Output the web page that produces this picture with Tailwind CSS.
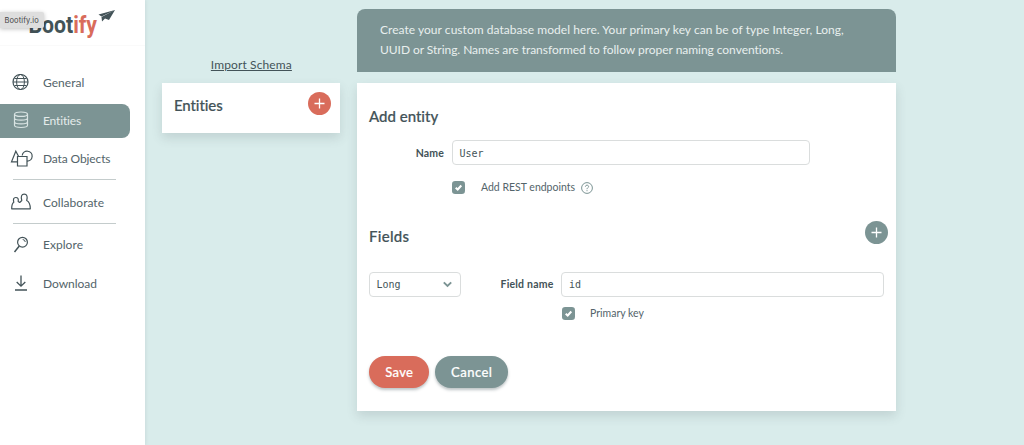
<!DOCTYPE html>
<html lang="en">
<head>
<meta charset="utf-8">
<title>Bootify.io</title>
<script src="https://cdn.jsdelivr.net/npm/@tailwindcss/browser@4"></script>
</head>
<body class="flex h-[445px] w-[1024px] overflow-hidden bg-[#d9eceb] font-['Lato',sans-serif] text-[#435358] [font-variant-ligatures:none]">
<aside class="relative h-full w-[145px] shrink-0 bg-white shadow-[0_0_4px_rgba(67,83,88,0.15)]">
  <header class="h-[46px] border-b border-[#fafafa]">
    <svg class="block" width="145" height="45" viewBox="0 0 145 45">
      <text x="28.5" y="33.3" font-family="Roboto" font-weight="700" font-size="24" textLength="68.5" lengthAdjust="spacingAndGlyphs" fill="#435358">Boot<tspan fill="#d96c5b">ify</tspan></text>
      <path d="M115 10L98.500 14.500L101.500 16.500ZM115 10L101.500 17L102 21.500L105 18.500L109 20Z" fill="#435358"/>
    </svg>
  </header>
  <div class="absolute left-0 top-[12px] flex h-[16px] w-[44px] items-center rounded-r-[2px] bg-[#dedede] pl-[4.500px] pt-px font-['Inter',sans-serif] text-[7.500px] tracking-[0.100px] text-[#444] shadow-[0_1px_4px_rgba(0,0,0,0.250)]">Bootify.io</div>
  <nav class="pt-[20px] text-[12px] text-[#53646a]">
    <a class="flex h-[34px] items-center">
      <svg class="mb-[2px] ml-[12px] mr-[14px]" width="17" height="17" viewBox="0 0 17 17" fill="none" stroke="#435358"><circle cx="8.500" cy="8" r="7.500" stroke-width="1.200"/><ellipse cx="8.500" cy="8" rx="3.900" ry="7.500"/><path d="M1 8H16M2.500 4.500H14.500M2.500 11.500H14.500"/></svg>
      <span class="tracking-[0.040px]">General</span>
    </a>
    <a class="mt-[4px] flex h-[34px] w-[130px] items-center rounded-r-[8px] bg-[#7c9494] text-[#e5eceb]">
      <svg class="mb-[2px] ml-[13px] mr-[14px]" width="16" height="18" viewBox="0 0 16 18" fill="none" stroke="#d9e4e3" stroke-width="1.200"><ellipse cx="8" cy="3.200" rx="6.500" ry="2.200"/><path d="M1.500 3.200V14.300C1.500 17.200 14.500 17.200 14.500 14.300V3.200M1.500 7C1.500 9.900 14.500 9.900 14.500 7M1.500 10.700C1.500 13.600 14.500 13.600 14.500 10.700"/></svg>
      <span class="-tracking-[0.150px]">Entities</span>
    </a>
    <a class="mt-[4px] flex h-[34px] items-center">
      <svg class="mb-[3px] ml-[10px] mr-[10px]" width="23" height="18" viewBox="0 0 23 18" fill="none" stroke="#435358" stroke-width="1.200"><path d="M7 12.900H1.500L5.800 2.200L8.500 7.300M12.200 6.500A5 5 0 1 1 17 12.200"/><path d="M7.500 7.500H17V17H7.500Z"/></svg>
      <span class="-tracking-[0.120px]">Data Objects</span>
    </a>
    <div class="ml-[13px] mt-[3px] h-px w-[103px] bg-[#c4cccc]"></div>
    <a class="mt-[6px] flex h-[34px] items-center">
      <svg class="mb-[2px] ml-[11px] mr-[11px]" width="21" height="18" viewBox="0 0 21 18" fill="none" stroke="#435358" stroke-width="1.200" stroke-linejoin="round"><path d="M.700 15.800C.700 12 1 10.500 2.800 9.300C2 6 2.500 4.500 4.800 4.500C7 4.500 7.600 6 7.200 8.500L8.700 9.500L10.800 7.500C9.600 3.500 10.500 1.200 13.200 1.200C16 1.200 16.800 3.500 15.700 7.500C18.700 9 19.300 11 19.300 15.800Z"/></svg>
      <span class="tracking-[0.040px]">Collaborate</span>
    </a>
    <div class="ml-[13px] mt-[3px] h-px w-[103px] bg-[#c4cccc]"></div>
    <a class="mt-[4px] flex h-[34px] items-center">
      <svg class="ml-[13px] mr-[14px]" width="16" height="18" viewBox="0 0 16 18" fill="none" stroke="#435358"><circle cx="9.500" cy="6.200" r="4.900" stroke-width="1.200"/><path d="M9.700 3.500Q12 3.700 12.300 6"/><path d="M6.300 10L1.500 16" stroke-width="1.500"/></svg>
      <span class="tracking-[0.040px]">Explore</span>
    </a>
    <a class="mt-[5px] flex h-[34px] items-center">
      <svg class="mb-[2px] ml-[14px] mr-[15px]" width="14" height="18" viewBox="0 0 14 18" fill="none" stroke="#435358" stroke-width="1.300"><path d="M7 1.500V12M2.700 8L7 12.200L11.300 8M1 16H13"/></svg>
      <span class="-tracking-[0.040px]">Download</span>
    </a>
  </nav>
</aside>
<section class="ml-[17.400px] w-[178px] shrink-0 pt-[56px]">
  <div class="h-[27px] text-center text-[12px] leading-[17px] tracking-[0.120px] underline underline-offset-1">Import Schema</div>
  <div class="flex h-[50px] justify-between bg-white pl-[11.600px] pr-[9.400px] pt-[9px] shadow-[0_5px_10px_rgba(67,83,88,0.160)]">
    <h2 class="pt-[3px] text-[15px] font-medium leading-[20px] -tracking-[0.100px] [-webkit-text-stroke:0.2px_#435358]">Entities</h2>
    <button class="grid size-[23px] place-items-center rounded-full bg-[#d96c5b]"><svg width="11" height="11" viewBox="0 0 11 11" stroke="white" stroke-width="1.300"><path d="M.500 5.500H10.500M5.500 .500V10.500"/></svg></button>
  </div>
</section>
<main class="ml-[17.100px] w-[538.500px] shrink-0 pt-[9px]">
  <div class="h-[63px] rounded-t-[8px] bg-[#7c9494] pl-[22.500px] pt-[11px] text-[12px] leading-[20px] text-[#e8efee]">
    <p class="whitespace-nowrap tracking-[0.040px]">Create your custom database model here. Your primary key can be of type Integer, Long,</p>
    <p class="whitespace-nowrap -tracking-[0.040px]">UUID or String. Names are transformed to follow proper naming conventions.</p>
  </div>
  <div class="mt-[11px] h-[328px] bg-white px-[11.500px] pt-[23px] shadow-[0_5px_10px_rgba(67,83,88,0.160)]">
    <h2 class="text-[15px] font-medium leading-[20px] [-webkit-text-stroke:0.2px_#435358]">Add entity</h2>
    <div class="mt-[14px] flex h-[25px] items-center">
      <label class="w-[83px] pr-[8px] pt-[2px] text-right text-[10.500px] font-bold tracking-[0.150px]">Name</label>
      <div class="flex h-[25px] w-[358px] items-center rounded-[4px] border border-[#dadddd] pl-[6.500px] pt-px font-['DejaVu_Sans_Mono',monospace] text-[10px]">User</div>
    </div>
    <div class="ml-[83px] mt-[16px] flex h-[13px] items-center">
      <svg width="13" height="13" viewBox="0 0 13 13"><rect width="13" height="13" rx="3.200" fill="#7c9494"/><path d="M3.700 6.700L5.700 8.500L9.300 4.500" stroke="white" stroke-width="2" fill="none"/></svg>
      <span class="ml-[16px] text-[10.500px] text-[#53646a]">Add REST endpoints</span>
      <svg class="ml-[6px]" width="12" height="12" viewBox="0 0 12 12" fill="none" stroke="#7c9494"><circle cx="6" cy="6" r="5.400"/><path d="M4.400 4.700C4.400 2.600 7.600 2.700 7.600 4.600C7.600 5.700 6 5.700 6 7.200M6 8.200V9.200"/></svg>
    </div>
    <div class="mt-[27px] flex h-[23px] justify-between">
      <h2 class="pt-[5px] text-[15px] font-medium leading-[20px] tracking-[0.300px] [-webkit-text-stroke:0.2px_#435358]">Fields</h2>
      <button class="-mr-[3.500px] grid size-[23px] place-items-center rounded-full bg-[#7c9494]"><svg width="11" height="11" viewBox="0 0 11 11" stroke="white" stroke-width="1.300"><path d="M.500 5.500H10.500M5.500 .500V10.500"/></svg></button>
    </div>
    <div class="mt-[28px] flex h-[25px] items-center">
      <div class="flex h-[25px] w-[92.500px] items-center justify-between rounded-[4px] border border-[#dadddd] pl-[6.500px] pr-[8px] font-['DejaVu_Sans_Mono',monospace] text-[10px]">Long<svg width="9" height="7" viewBox="0 0 9 7" fill="none" stroke="#7c9494" stroke-width="1.900"><path d="M.800 1.300L4.500 5L8.200 1.300"/></svg></div>
      <label class="w-[100.500px] whitespace-nowrap pr-[8px] text-right text-[10.500px] font-bold tracking-[0.200px]">Field name</label>
      <div class="flex h-[25px] w-[323px] shrink-0 items-center rounded-[4px] border border-[#dadddd] pl-[6.500px] font-['DejaVu_Sans_Mono',monospace] text-[10px]">id</div>
    </div>
    <div class="ml-[193px] mt-[10px] flex h-[13px] items-center">
      <svg width="13" height="13" viewBox="0 0 13 13"><rect width="13" height="13" rx="3.200" fill="#7c9494"/><path d="M3.700 6.700L5.700 8.500L9.300 4.500" stroke="white" stroke-width="2" fill="none"/></svg>
      <span class="ml-[15px] text-[10.500px] text-[#53646a]">Primary key</span>
    </div>
    <div class="mt-[36px] flex gap-[5.500px] text-[13px] font-medium text-white [-webkit-text-stroke:0.2px_white]">
      <button class="h-[32px] w-[60.500px] rounded-full bg-[#d96c5b] pt-px tracking-[0.300px] shadow-[0_2px_3px_rgba(67,83,88,0.350)]">Save</button>
      <button class="h-[32px] w-[73.500px] rounded-full bg-[#7c9494] pt-px tracking-[0.450px] shadow-[0_2px_3px_rgba(67,83,88,0.350)]">Cancel</button>
    </div>
  </div>
</main>
</body>
</html>
